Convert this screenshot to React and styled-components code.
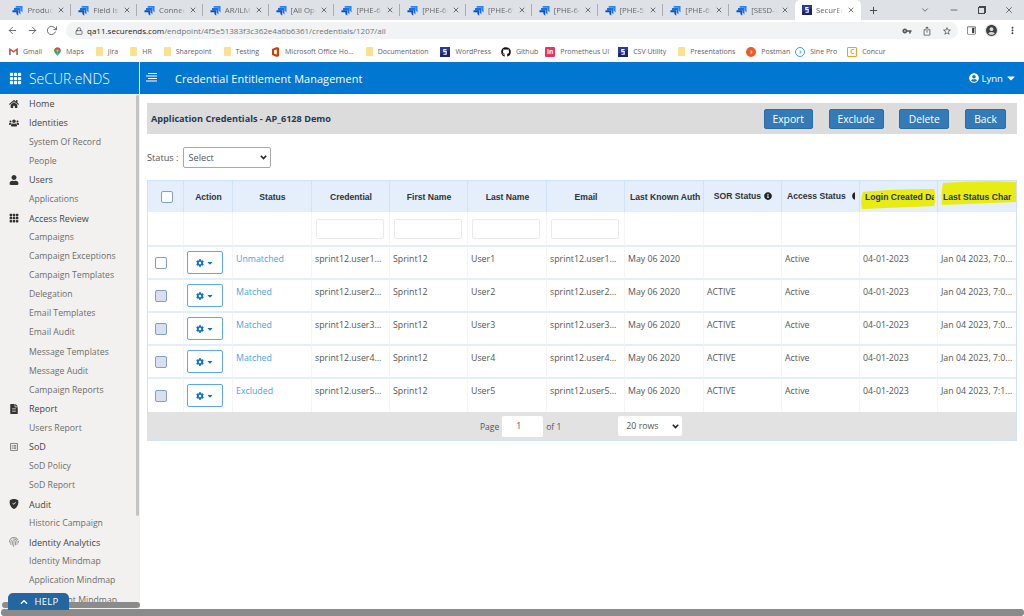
import React from "react";
import styled, { createGlobalStyle } from "styled-components";
import {
  FaCaretDown,
  FaChevronUp,
  FaCog,
  FaFileAlt,
  FaFingerprint,
  FaGithub,
  FaHome,
  FaInfoCircle,
  FaUser,
  FaUserCircle,
  FaUsers,
} from "react-icons/fa";
import { BsGrid3X3GapFill, BsShieldFillCheck, BsLayoutSidebarInsetReverse } from "react-icons/bs";
import { MdListAlt, MdVpnKey, MdMoreVert, MdOutlineIosShare, MdStarBorder, MdAccountCircle } from "react-icons/md";
import { FiArrowLeft, FiArrowRight, FiRotateCw, FiLock, FiX, FiPlus, FiChevronDown, FiMinus } from "react-icons/fi";

const selectArrow = `url("data:image/svg+xml,%3Csvg xmlns='http://www.w3.org/2000/svg' width='7' height='5'%3E%3Cpath d='M.8.8 3.5 3.6 6.2.8' fill='none' stroke='%23222' stroke-width='1.5'/%3E%3C/svg%3E")`;

const GlobalStyle = createGlobalStyle`
  html, body {
    margin: 0;
    height: 100%;
    background: #fff;
    overflow: hidden;
  }
  * {
    box-sizing: border-box;
  }
`;

const Page = styled.div`
  position: relative;
  width: 1024px;
  height: 616px;
  display: flex;
  flex-direction: column;
  overflow: hidden;
  font-family: "Open Sans", "Liberation Sans", sans-serif;
`;

/* browser chrome */
const TabStrip = styled.div`
  height: 20px;
  flex: none;
  background: #dee1e6;
  display: flex;
  align-items: center;
  padding-left: 5.4px;
`;
const Tab = styled.div`
  width: 65.8px;
  height: 20px;
  flex: none;
  display: flex;
  align-items: center;
  gap: 4px;
  padding: 0 6px 0 7px;
  background: ${(p) => (p.$active ? "#fff" : "transparent")};
  border-radius: ${(p) => (p.$active ? "5px 5px 0 0" : "0")};
  position: relative;
  font-size: 7.8px;
  color: #666;
  &::after {
    content: "";
    display: ${(p) => (p.$active || p.$noSep ? "none" : "block")};
    position: absolute;
    right: 0;
    top: 4px;
    height: 12px;
    border-right: 1px solid #a9acb0;
  }
`;
const TabLabel = styled.span`
  flex: 1;
  min-width: 0;
  overflow: hidden;
  white-space: nowrap;
  mask-image: linear-gradient(to right, #000 75%, transparent);
`;
const NewTab = styled.div`
  width: 26px;
  display: flex;
  justify-content: center;
  color: #3c4043;
  font-size: 11px;
`;
const WindowControls = styled.div`
  margin-left: auto;
  width: 112px;
  display: flex;
  justify-content: space-between;
  padding: 0 10px 0 8px;
  color: #55585c;
  font-size: 10px;
  align-items: center;
`;
const RestoreIcon = styled.span`
  width: 7px;
  height: 7px;
  border: 1px solid #45484c;
  box-shadow: 1px -1px 0 0 #45484c;
`;
const Toolbar = styled.div`
  height: 21px;
  flex: none;
  background: #fff;
  display: flex;
  align-items: center;
  padding-left: 7px;
  color: #5f6368;
  font-size: 11px;
`;
const NavIcons = styled.div`
  width: 59px;
  display: flex;
  gap: 8.5px;
  font-size: 11px;
`;
const UrlBar = styled.div`
  width: 892px;
  height: 17px;
  border-radius: 9px;
  background: #f1f3f4;
  display: flex;
  align-items: center;
  padding: 0 6px 0 9px;
  gap: 4px;
  font-size: 8px;
  color: #70757a;
`;
const UrlHost = styled.span`
  color: #202124;
`;
const UrlTools = styled.div`
  margin-left: auto;
  display: flex;
  gap: 10px;
  font-size: 10px;
  color: #55585c;
`;
const ProfileTools = styled.div`
  display: flex;
  align-items: center;
  gap: 9px;
  margin-left: 9px;
  font-size: 11px;
  color: #3c4043;
`;
const Avatar = styled.span`
  width: 13px;
  height: 13px;
  border-radius: 50%;
  background: #dadce0;
  display: flex;
  align-items: center;
  justify-content: center;
  font-size: 13px;
`;
const Bookmarks = styled.div`
  height: 21px;
  flex: none;
  background: #fff;
  display: flex;
  align-items: center;
  padding-left: 9px;
  gap: 12px;
`;
const Bookmark = styled.div`
  display: flex;
  align-items: center;
  gap: 5px;
  margin-right: ${(p) => -(p.$tight || 0)}px;
  font-size: 7px;
  color: #5f6368;
  white-space: nowrap;
`;
const Folder = styled.span`
  width: 7px;
  height: 9px;
  background: #fbe08f;
  border-radius: 1px;
  flex: none;
`;
const Fav = styled.span`
  width: 10px;
  height: 10px;
  flex: none;
  border-radius: ${(p) => (p.$round ? "50%" : "1px")};
  background: ${(p) => (p.$ring ? "#fff" : p.$bg)};
  border: ${(p) => (p.$ring ? `1px solid ${p.$bg}` : "0")};
  color: ${(p) => (p.$ring ? p.$bg : "#fff")};
  font-size: 6.5px;
  font-weight: 700;
  line-height: ${(p) => (p.$ring ? "8px" : "10px")};
  text-align: center;
`;

/* app header */
const Header = styled.header`
  height: 32px;
  flex: none;
  background: #0177d2;
  display: flex;
  align-items: center;
  color: #fff;
`;
const Brand = styled.div`
  width: 140px;
  height: 100%;
  flex: none;
  border-right: 1px solid #e8f2fb;
  display: flex;
  align-items: center;
  padding-left: 9px;
  gap: 7px;
  font-size: 13px;
`;
const BrandName = styled.span`
  font-size: 13.8px;
  font-weight: 300;
  letter-spacing: 0.1px;
`;
const Burger = styled.svg`
  margin-left: 6px;
  width: 11px;
  height: 10px;
`;
const HeaderTitle = styled.div`
  margin-left: 18px;
  font-size: 10.9px;
  font-weight: 500;
  letter-spacing: 0.1px;
`;
const HeaderUser = styled.div`
  margin-left: auto;
  margin-right: 7px;
  display: flex;
  align-items: center;
  gap: 2px;
  font-size: 9.6px;
`;

/* body */
const Body = styled.div`
  flex: 1;
  min-height: 0;
  display: flex;
`;
const Sidebar = styled.nav`
  position: relative;
  width: 140px;
  flex: none;
  background: #f2f1f0;
  overflow: hidden;
`;
const NavRow = styled.div`
  height: 19.08px;
  display: flex;
  align-items: center;
  padding-left: ${(p) => (p.$sub ? "29px" : "8px")};
  font-size: ${(p) => (p.$sub ? "8.7px" : "9px")};
  white-space: nowrap;
  color: ${(p) => (p.$sub ? "#6d6d6d" : "#454545")};
  font-weight: ${(p) => (p.$sub ? 400 : 500)};
`;
const NavIcon = styled.span`
  width: 11px;
  margin-right: 10px;
  display: flex;
  justify-content: center;
  font-size: 10px;
  color: ${(p) => p.$color || "#333"};
`;
const SideThumb = styled.div`
  position: absolute;
  right: 1px;
  top: 1px;
  bottom: 93px;
  width: 3px;
  background: #c4c4c4;
  border-radius: 2px;
`;
const SideHScroll = styled.div`
  position: absolute;
  left: 2px;
  right: 0;
  bottom: 1px;
  height: 6px;
  background: #8b8b8b;
  border-radius: 3px;
`;
const HelpButton = styled.div`
  position: absolute;
  left: 8px;
  bottom: 6px;
  width: 61px;
  height: 17px;
  background: #24669f;
  border-radius: 5px 5px 0 0;
  color: #fff;
  display: flex;
  align-items: center;
  justify-content: center;
  gap: 6px;
  font-size: 9.5px;
  font-weight: 500;
  letter-spacing: 0.3px;
  padding-left: 2px;
  z-index: 2;
`;
const BottomScroll = styled.div`
  height: 7px;
  flex: none;
  padding: 0 0 0 1px;
  background: #fff;
`;
const BottomThumb = styled.div`
  height: 100%;
  background: #8b8b8b;
  border-radius: 3px;
`;

const Main = styled.main`
  flex: 1;
  min-width: 0;
  padding: 9px 7px 0 7px;
`;
const TitleBar = styled.div`
  height: 31px;
  background: #dcdcdc;
  display: flex;
  align-items: center;
  padding: 0 11px 0 4px;
  gap: 15.75px;
`;
const PageTitle = styled.div`
  margin-right: auto;
  font-size: 9.15px;
  font-weight: 700;
  color: #1f3a55;
`;
const ActionButton = styled.button`
  height: 20px;
  width: ${(p) => p.$w}px;
  padding: 0;
  border: 1px solid #2e6da4;
  border-radius: 2px;
  background: #337ab7;
  color: #fff;
  font-family: inherit;
  font-size: 10.3px;
`;
const FilterRow = styled.div`
  display: flex;
  align-items: center;
  gap: 4px;
  margin-top: 13px;
  height: 21px;
  font-size: 9.2px;
  color: #555;
`;
const StatusSelect = styled.select`
  appearance: none;
  width: 88px;
  height: 21px;
  border: 1px solid #a9a9a9;
  border-radius: 2px;
  background: #fff ${selectArrow} no-repeat right 3px center;
  color: #555;
  font-family: inherit;
  font-size: 9.2px;
  padding-left: 5px;
`;

const Table = styled.table`
  margin-top: 12px;
  width: 870px;
  table-layout: fixed;
  border-collapse: separate;
  border-spacing: 0;
  border: 1px solid #cfe2f7;
  border-bottom: 0;
  font-size: 8.8px;
  color: #555;
`;
const HeadCell = styled.th`
  position: relative;
  height: 31px;
  padding: 0 ${(p) => p.$padRight ?? 4}px 0 ${(p) => p.$pad ?? 5}px;
  background: #e5eefb;
  border-right: 1px solid #cfe2f7;
  font-family: "Liberation Sans", Arial, sans-serif;
  font-size: 8.6px;
  font-weight: 700;
  color: #2c3338;
  text-align: ${(p) => p.$align || "center"};
  white-space: nowrap;
  &:last-child {
    border-right: 0;
  }
`;
const HeadText = styled.span`
  position: relative;
  display: block;
  overflow: hidden;
`;
const Marker = styled.svg`
  position: absolute;
  inset: 0;
  width: 100%;
  height: 100%;
`;
const InfoIcon = styled.span`
  margin-left: ${(p) => p.$gap ?? 3}px;
  font-size: 8px;
  vertical-align: -1px;
  color: #222;
`;
const FilterCell = styled.td`
  height: 35px;
  padding: 0;
  text-align: center;
  border-right: 1px solid #f5f5f5;
  border-bottom: 2px solid #e3eefa;
  &:last-child {
    border-right: 0;
  }
`;
const FilterInput = styled.input`
  width: 68px;
  height: 20px;
  margin: 1px 2px 0 0;
  border: 1px solid #eaeaea;
  border-radius: 2px;
  background: #fff;
`;
const Cell = styled.td`
  height: 33px;
  padding: 5px 0 0 3px;
  vertical-align: top;
  line-height: 14px;
  border-right: 1px solid #f5f5f5;
  border-bottom: ${(p) => (p.$last ? "0" : "2px solid #e3eefa")};
  white-space: nowrap;
  overflow: hidden;
  &:last-child {
    border-right: 0;
  }
`;
const BoxCell = styled(Cell)`
  padding: 0;
  vertical-align: middle;
`;
const Check = styled.input.attrs({ type: "checkbox" })`
  appearance: none;
  display: block;
  width: 12px;
  height: 12px;
  margin: ${(p) => (p.$head ? "0 0 0 13px" : "0 0 0 7px")};
  border: 1px solid #7f9fc4;
  border-radius: 2px;
  background: ${(p) => (p.$shade ? "#d9dfee" : "#fff")};
`;
const GearButton = styled.button`
  width: 36px;
  height: 23px;
  margin-left: 3px;
  padding: 0;
  display: flex;
  align-items: center;
  justify-content: center;
  gap: 2px;
  border: 1px solid #5aa9e6;
  border-radius: 2px;
  background: #fff;
  color: #0b74c9;
  font-size: 8px;
`;
const StatusLink = styled.a`
  color: #45a5e6;
  text-decoration: none;
`;
const Pager = styled.div`
  width: 870px;
  height: 29px;
  background: #e2e2e2;
  border: 1px solid #cfe2f7;
  border-top: 0;
  display: flex;
  align-items: center;
  padding-left: 332px;
  font-size: 8.5px;
  color: #555;
`;
const PageInput = styled.input`
  width: 41px;
  height: 21px;
  margin: 0 3px;
  border: 0;
  border-radius: 2px;
  background: #fff;
  color: #555;
  font-family: inherit;
  font-size: 8.8px;
  text-align: left;
  padding-left: 14px;
`;
const RowsSelect = styled.select`
  appearance: none;
  width: 64px;
  height: 20px;
  margin-left: 57px;
  border: 0;
  border-radius: 2px;
  background: #fff ${selectArrow} no-repeat right 3px center;
  color: #555;
  font-family: inherit;
  font-size: 8.8px;
  padding-left: 8px;
`;

const TabIcon = () => (
  <svg width="11" height="11" viewBox="0 0 12 12" style={{ flex: "none" }}>
    <path d="M4 1h7.5v7.2L9.4 6 9.3 3H4z" fill="#2684ff" />
    <path d="M2.2 3.4h7v7L7.2 8.3V5.6H2.2z" fill="#1c6fe0" />
    <path d="M.5 5.8h6.3v6L4.8 9.8V7.8H.5z" fill="#0052cc" />
  </svg>
);

const SecurIcon = () => (
  <svg width="10" height="10" viewBox="0 0 10 10" style={{ flex: "none" }}>
    <rect width="10" height="10" fill="#2a3a9c" />
    <path d="M0 7 10 3v7H0z" fill="#1b2470" />
    <path d="M6.5 2.6H3.8v2h2.4v2.6H3.4" fill="none" stroke="#fff" strokeWidth="1.1" />
  </svg>
);

const GmailIcon = () => (
  <svg width="9" height="7" viewBox="0 0 10 8" style={{ flex: "none" }}>
    <path d="M.8 8V1.2L5 4.4l4.2-3.2V8" fill="none" stroke="#ea4335" strokeWidth="1.5" />
    <path d="M.8 8V3" stroke="#4285f4" strokeWidth="1.5" />
    <path d="M9.2 8V3" stroke="#34a853" strokeWidth="1.5" />
  </svg>
);

const MapsIcon = () => (
  <svg width="7" height="10" viewBox="0 0 8 10" style={{ flex: "none" }}>
    <path d="M4 10C3 7.5 0 6 0 3.4A4 4 0 0 1 4 0z" fill="#34a853" />
    <path d="M4 10c1-2.5 4-4 4-6.6A4 4 0 0 0 4 0z" fill="#4285f4" />
    <path d="M1 1.2A4 4 0 0 1 7 1.2L4 3.4z" fill="#ea4335" />
    <circle cx="4" cy="3.4" r="1.3" fill="#fbbc04" />
  </svg>
);

const OfficeIcon = () => (
  <svg width="9" height="10" viewBox="0 0 9 10" style={{ flex: "none" }}>
    <path d="M1 2 6 0l2 1v8L6 10 1 8z" fill="#d83b01" />
    <path d="M3 3.2 5.8 2.6v4.8L3 6.8z" fill="#fff" />
  </svg>
);

const tabs = [
  "Product",
  "Field Iss",
  "Connect",
  "AR/ILM",
  "[All Ope",
  "[PHE-61",
  "[PHE-64",
  "[PHE-69",
  "[PHE-64",
  "[PHE-53",
  "[PHE-68",
  "[SESD-7",
];

const bookmarks = [
  { label: "Gmail", icon: <GmailIcon /> },
  { label: "Maps", icon: <MapsIcon /> },
  { label: "Jira", icon: <Folder /> },
  { label: "HR", icon: <Folder /> },
  { label: "Sharepoint", icon: <Folder /> },
  { label: "Testing", icon: <Folder /> },
  { label: "Microsoft Office Ho...", icon: <OfficeIcon /> },
  { label: "Documentation", icon: <Folder /> },
  { label: "WordPress", icon: <SecurIcon />, tight: 2 },
  { label: "Github", icon: <FaGithub size={10} color="#111" />, tight: 5 },
  { label: "Prometheus UI", icon: <Fav $bg="#e8336b">in</Fav>, tight: 3 },
  { label: "CSV Utility", icon: <SecurIcon /> },
  { label: "Presentations", icon: <Folder />, tight: 1 },
  { label: "Postman", icon: <Fav $bg="#ef5b25" $round>›</Fav>, tight: 7 },
  { label: "Sine Pro", icon: <Fav $bg="#33a4e0" $round $ring>›</Fav>, tight: 2 },
  { label: "Concur", icon: <Fav $bg="#f0a01e" $ring>C</Fav> },
];

const nav = [
  { label: "Home", icon: <FaHome /> },
  { label: "Identities", icon: <FaUsers /> },
  { label: "System Of Record" },
  { label: "People" },
  { label: "Users", icon: <FaUser /> },
  { label: "Applications" },
  { label: "Access Review", icon: <BsGrid3X3GapFill /> },
  { label: "Campaigns" },
  { label: "Campaign Exceptions" },
  { label: "Campaign Templates" },
  { label: "Delegation" },
  { label: "Email Templates" },
  { label: "Email Audit" },
  { label: "Message Templates" },
  { label: "Message Audit" },
  { label: "Campaign Reports" },
  { label: "Report", icon: <FaFileAlt /> },
  { label: "Users Report" },
  { label: "SoD", icon: <MdListAlt />, color: "#666" },
  { label: "SoD Policy" },
  { label: "SoD Report" },
  { label: "Audit", icon: <BsShieldFillCheck /> },
  { label: "Historic Campaign" },
  { label: "Identity Analytics", icon: <FaFingerprint />, color: "#9a9a9a" },
  { label: "Identity Mindmap" },
  { label: "Application Mindmap" },
  { label: "Entitlement Mindmap" },
];

const columns = [36, 49, 79, 78, 78, 79, 78, 79, 78, 78, 78, 78];

const rows = [
  { n: 1, status: "Unmatched", sor: "", time: "7:0..." },
  { n: 2, status: "Matched", sor: "ACTIVE", time: "7:0..." },
  { n: 3, status: "Matched", sor: "ACTIVE", time: "7:0..." },
  { n: 4, status: "Matched", sor: "ACTIVE", time: "7:0..." },
  { n: 5, status: "Excluded", sor: "ACTIVE", time: "7:1..." },
];

const App = () => (
  <Page>
    <GlobalStyle />
    <TabStrip>
      {tabs.map((t, i) => (
        <Tab key={i} $noSep={i === tabs.length - 1}>
          <TabIcon />
          <TabLabel>{t}</TabLabel>
          <FiX size={8} color="#333" />
        </Tab>
      ))}
      <Tab $active>
        <SecurIcon />
        <TabLabel>SecurEn</TabLabel>
        <FiX size={8} color="#333" />
      </Tab>
      <NewTab>
        <FiPlus />
      </NewTab>
      <WindowControls>
        <FiChevronDown />
        <FiMinus />
        <RestoreIcon />
        <FiX />
      </WindowControls>
    </TabStrip>
    <Toolbar>
      <NavIcons>
        <FiArrowLeft />
        <FiArrowRight />
        <FiRotateCw />
      </NavIcons>
      <UrlBar>
        <FiLock size={8} color="#444" />
        <span>
          <UrlHost>qa11.securends.com</UrlHost>/endpoint/4f5e51383f3c362e4a6b6361/credentials/1207/all
        </span>
        <UrlTools>
          <MdVpnKey />
          <MdOutlineIosShare />
          <MdStarBorder />
        </UrlTools>
      </UrlBar>
      <ProfileTools>
        <BsLayoutSidebarInsetReverse size={9} />
        <Avatar>
          <MdAccountCircle />
        </Avatar>
        <MdMoreVert />
      </ProfileTools>
    </Toolbar>
    <Bookmarks>
      {bookmarks.map((b) => (
        <Bookmark key={b.label} $tight={b.tight}>
          {b.icon}
          {b.label}
        </Bookmark>
      ))}
    </Bookmarks>
    <Header>
      <Brand>
        <BsGrid3X3GapFill />
        <BrandName>SeCUR·eNDS</BrandName>
      </Brand>
      <Burger viewBox="0 0 11 10">
        <path d="M2 .5h9M0 3h11M2 5.5h9M0 8h11" stroke="#fff" strokeWidth="1.2" />
      </Burger>
      <HeaderTitle>Credential Entitlement Management</HeaderTitle>
      <HeaderUser>
        <FaUserCircle size={10} />
        Lynn
        <FaCaretDown size={12} />
      </HeaderUser>
    </Header>
    <Body>
      <Sidebar>
        {nav.map((n) => (
          <NavRow key={n.label} $sub={!n.icon}>
            {n.icon && <NavIcon $color={n.color}>{n.icon}</NavIcon>}
            {n.label}
          </NavRow>
        ))}
        <SideThumb />
        <SideHScroll />
      </Sidebar>
      <Main>
        <TitleBar>
          <PageTitle>Application Credentials - AP_6128 Demo</PageTitle>
          <ActionButton $w={49}>Export</ActionButton>
          <ActionButton $w={55}>Exclude</ActionButton>
          <ActionButton $w={50}>Delete</ActionButton>
          <ActionButton $w={41}>Back</ActionButton>
        </TitleBar>
        <FilterRow>
          Status :
          <StatusSelect defaultValue="Select">
            <option>Select</option>
          </StatusSelect>
        </FilterRow>
        <Table>
          <colgroup>
            {columns.map((w, i) => (
              <col key={i} style={{ width: w }} />
            ))}
          </colgroup>
          <thead>
            <tr>
              <HeadCell $pad={0} $align="left">
                <Check $head readOnly />
              </HeadCell>
              <HeadCell>Action</HeadCell>
              <HeadCell>Status</HeadCell>
              <HeadCell>Credential</HeadCell>
              <HeadCell>First Name</HeadCell>
              <HeadCell>Last Name</HeadCell>
              <HeadCell>Email</HeadCell>
              <HeadCell $align="left">Last Known Auth</HeadCell>
              <HeadCell>
                SOR Status
                <InfoIcon>
                  <FaInfoCircle />
                </InfoIcon>
              </HeadCell>
              <HeadCell $align="left" $pad={5}>
                <HeadText>
                  Access Status
                  <InfoIcon $gap={6}>
                    <FaInfoCircle />
                  </InfoIcon>
                </HeadText>
              </HeadCell>
              <HeadCell $align="left" $pad={5} $padRight={3}>
                <Marker viewBox="0 0 78 31" preserveAspectRatio="none">
                  <path d="M3 11Q30 8 75 8 78 16 75 25 30 27 2 28 0 20 3 11z" fill="#e8ec14" />
                </Marker>
                <HeadText>Login Created Da</HeadText>
              </HeadCell>
              <HeadCell $align="left" $pad={5} $padRight={3}>
                <Marker viewBox="0 0 79 31" preserveAspectRatio="none">
                  <path d="M5 2Q40-1 79 1V21L4 24Q3 12 5 2z" fill="#e8ec14" />
                </Marker>
                <HeadText>Last Status Char</HeadText>
              </HeadCell>
            </tr>
          </thead>
          <tbody>
            <tr>
              <FilterCell />
              <FilterCell />
              <FilterCell />
              <FilterCell>
                <FilterInput />
              </FilterCell>
              <FilterCell>
                <FilterInput />
              </FilterCell>
              <FilterCell>
                <FilterInput />
              </FilterCell>
              <FilterCell>
                <FilterInput />
              </FilterCell>
              <FilterCell />
              <FilterCell />
              <FilterCell />
              <FilterCell />
              <FilterCell />
            </tr>
            {rows.map((r, i) => (
              <tr key={r.n}>
                <BoxCell $last={i === 4}>
                  <Check $shade={i > 0} readOnly />
                </BoxCell>
                <BoxCell $last={i === 4}>
                  <GearButton>
                    <FaCog />
                    <FaCaretDown />
                  </GearButton>
                </BoxCell>
                <Cell $last={i === 4}>
                  <StatusLink>{r.status}</StatusLink>
                </Cell>
                <Cell $last={i === 4}>sprint12.user{r.n}...</Cell>
                <Cell $last={i === 4}>Sprint12</Cell>
                <Cell $last={i === 4}>User{r.n}</Cell>
                <Cell $last={i === 4}>sprint12.user{r.n}...</Cell>
                <Cell $last={i === 4}>May 06 2020</Cell>
                <Cell $last={i === 4}>{r.sor}</Cell>
                <Cell $last={i === 4}>Active</Cell>
                <Cell $last={i === 4}>04-01-2023</Cell>
                <Cell $last={i === 4}>Jan 04 2023, {r.time}</Cell>
              </tr>
            ))}
          </tbody>
        </Table>
        <Pager>
          Page
          <PageInput defaultValue="1" />
          of 1
          <RowsSelect defaultValue="20 rows">
            <option>20 rows</option>
          </RowsSelect>
        </Pager>
      </Main>
    </Body>
    <HelpButton>
      <FaChevronUp size={8} />
      HELP
    </HelpButton>
    <BottomScroll>
      <BottomThumb />
    </BottomScroll>
  </Page>
);

export default App;
